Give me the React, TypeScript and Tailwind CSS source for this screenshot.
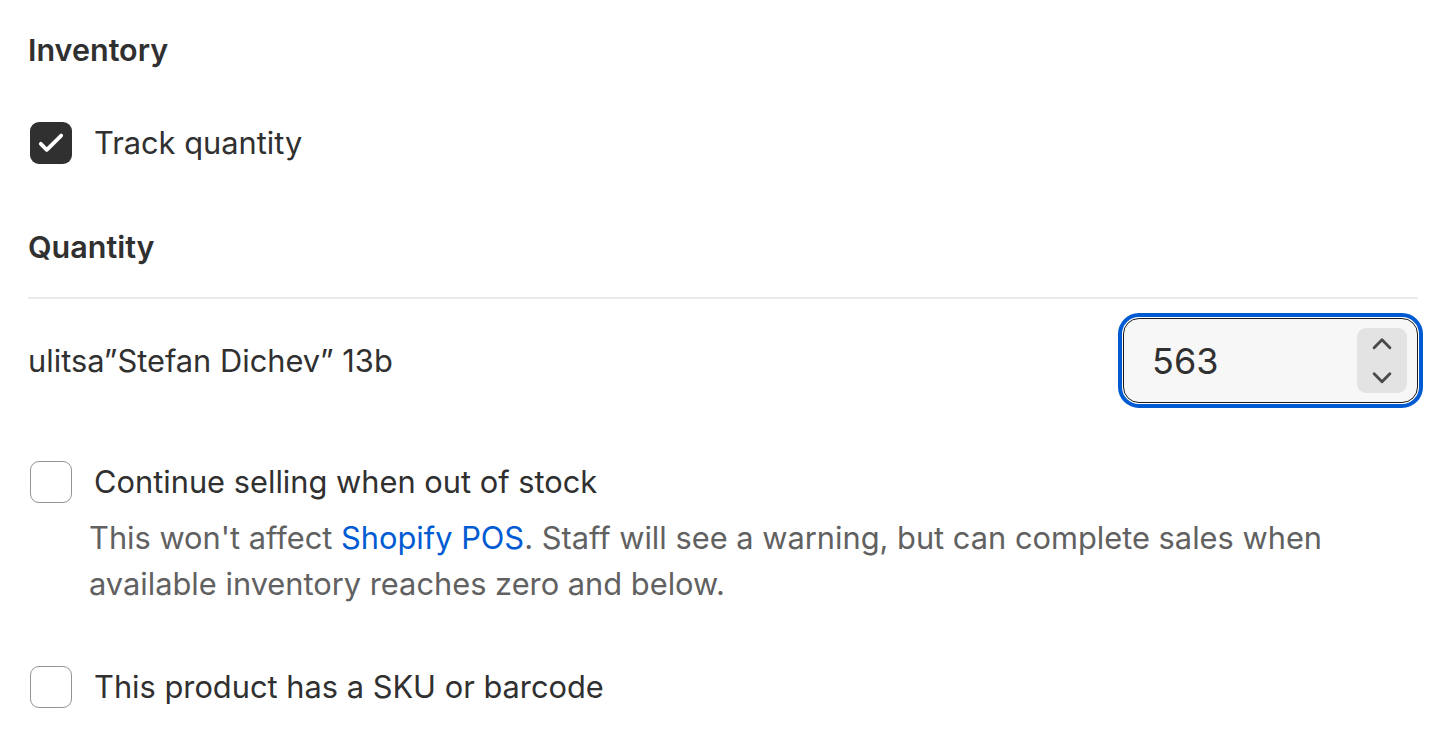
import { ChevronDown, ChevronUp } from "lucide-react";

const Checkbox = ({ checked }: { checked?: boolean }) => (
  <span
    className={`flex items-center justify-center w-[42px] h-[42px] rounded-[9px] shrink-0 ${
      checked ? "bg-[#303030]" : "bg-white border-[1.5px] border-[#949494]"
    }`}
  >
    {checked && (
      <svg width="34" height="34" viewBox="0 0 24 24" fill="none">
        <path d="M4.8 12.6l4.2 4.2L19.2 6.8" stroke="white" strokeWidth="2.7" strokeLinecap="round" strokeLinejoin="round" />
      </svg>
    )}
  </span>
);

export default function App() {
  return (
    <div
      className="min-h-[751px] bg-white pl-[28px] pr-[28px] text-[#303030] text-[30.8px] leading-[46px]"
      style={{ fontFamily: "Inter, 'Noto Sans', sans-serif" }}
    >
      <div className="pt-[27px]">
        {/* Inventory */}
        <h2 className="font-semibold text-[30.5px]">Inventory</h2>

        <label className="mt-[47px] flex items-center gap-[22px] pl-[2px]">
          <Checkbox checked />
          <span>Track quantity</span>
        </label>

        {/* Quantity */}
        <h2 className="mt-[58px] font-semibold text-[30.5px]">Quantity</h2>
        <div className="mt-[27px] h-[2px] bg-[#ebebeb]" />

        <div className="mt-[19px] flex items-center justify-between">
          <span>ulitsa”Stefan Dichev” 13b</span>
          <div className="flex items-center w-[295px] h-[85px] rounded-[16px] border-[1.5px] border-[#1a1a1a] bg-[#f7f7f7] outline-[4px] outline-solid outline-[#005bd3] outline-offset-[1px] pl-[28px] pr-[10px]">
            <span className="flex-1 text-[36px] text-[#303030]">563</span>
            <div className="flex flex-col items-center justify-center gap-[2px] w-[50px] h-[65px] rounded-[9px] bg-[#e3e3e3] text-[#4a4a4a]">
              <ChevronUp size={32} strokeWidth={2.2} />
              <ChevronDown size={32} strokeWidth={2.2} />
            </div>
          </div>
        </div>

        <label className="mt-[56px] flex items-center gap-[22px] pl-[2px]">
          <Checkbox />
          <span>Continue selling when out of stock</span>
        </label>
        <p className="mt-[10px] pl-[61px] text-[#616161]">
          This won't affect <a className="text-[#005bd3]">Shopify POS</a>. Staff will see a warning, but can complete sales when
          <br />
          available inventory reaches zero and below.
        </p>

        <label className="mt-[57px] flex items-center gap-[22px] pl-[2px]">
          <Checkbox />
          <span>This product has a SKU or barcode</span>
        </label>
      </div>
    </div>
  );
}
